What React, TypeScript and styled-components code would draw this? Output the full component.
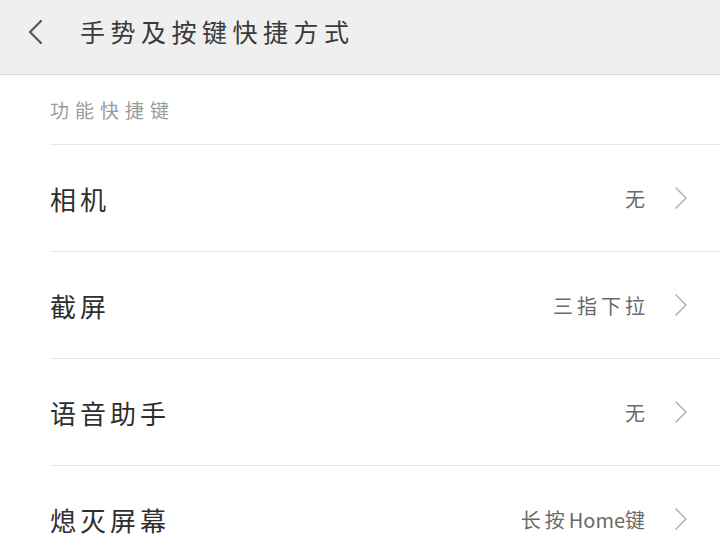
import styled, { createGlobalStyle } from "styled-components";

const GlobalStyle = createGlobalStyle`
  html, body {
    margin: 0;
    padding: 0;
    background: #ffffff;
  }
  body {
    font-family: "Noto Sans CJK SC", "Noto Sans", sans-serif;
    color: #333;
  }
`;

const items = [
  { label: "相机", value: "无" },
  { label: "截屏", value: "三指下拉" },
  { label: "语音助手", value: "无" },
  { label: "熄灭屏幕", value: "长按Home键" },
];

// keep latin words tight, the cjk glyphs get the wide spacing
const renderValue = (value: string) =>
  value.split(/([A-Za-z]+)/).map((part, i) =>
    /^[A-Za-z]+$/.test(part) ? <Latin key={i}>{part}</Latin> : part
  );

const App = () => {
  return (
    <Page>
      <GlobalStyle />
      <Header>
        <BackButton aria-label="返回">
          <svg width="16" height="26" viewBox="0 0 16 26" fill="none">
            <path d="M14 2L3 13L14 24" stroke="#555" strokeWidth="2.2" strokeLinecap="round" strokeLinejoin="round" />
          </svg>
        </BackButton>
        <Title>手势及按键快捷方式</Title>
      </Header>
      <Content>
        <SectionLabel>功能快捷键</SectionLabel>
        {items.map((item) => (
          <Row key={item.label}>
            <RowLabel>{item.label}</RowLabel>
            <RowRight>
              <RowValue>{renderValue(item.value)}</RowValue>
              <svg width="14" height="24" viewBox="0 0 14 24" fill="none">
                <path d="M2 2L12 12L2 22" stroke="#b4b4b4" strokeWidth="1.6" strokeLinecap="round" strokeLinejoin="round" />
              </svg>
            </RowRight>
          </Row>
        ))}
      </Content>
    </Page>
  );
};

const Page = styled.div`
  width: 720px;
  height: 546px;
  overflow: hidden;
  background: #ffffff;
`;

const Header = styled.div`
  height: 74px;
  display: flex;
  align-items: center;
  padding-left: 27px;
  background: #efefef;
  border-bottom: 1px solid #d8d8d8;
  box-shadow: 0 1px 2px rgba(0, 0, 0, 0.05);
`;

const BackButton = styled.div`
  display: flex;
  align-items: center;
  width: 16px;
  height: 26px;
  margin-top: -10px;
`;

const Title = styled.div`
  margin-left: 37px;
  margin-top: -12px;
  font-size: 25px;
  font-weight: 400;
  letter-spacing: 5.5px;
  color: #3a3a3a;
`;

const Content = styled.div`
  padding-left: 50px;
`;

const SectionLabel = styled.div`
  height: 69px;
  display: flex;
  align-items: center;
  font-size: 19px;
  letter-spacing: 6px;
  color: #9a9a9a;
`;

const Row = styled.div`
  height: 106px;
  display: flex;
  align-items: center;
  justify-content: space-between;
  padding-right: 32px;
  border-top: 1px solid #e6e6e6;
`;

const RowLabel = styled.div`
  font-size: 26px;
  letter-spacing: 4px;
  color: #2e2e2e;
`;

const RowRight = styled.div`
  display: flex;
  align-items: center;
  gap: 29px;
`;

const RowValue = styled.div`
  font-size: 20px;
  letter-spacing: 4px;
  color: #6a6a6a;
  margin-right: -4px;
`;

const Latin = styled.span`
  letter-spacing: 0;
`;

export default App;
